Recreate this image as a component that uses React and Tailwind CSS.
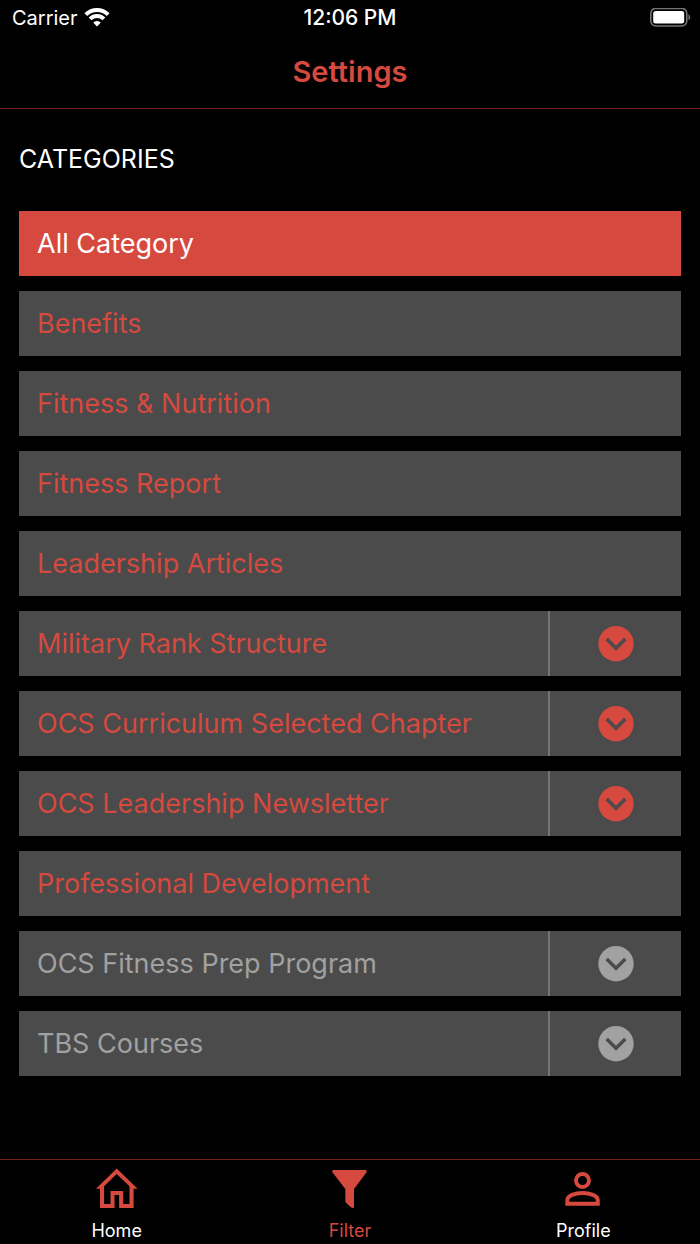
const categories = [
  { name: 'All Category', state: 'active' },
  { name: 'Benefits' },
  { name: 'Fitness & Nutrition' },
  { name: 'Fitness Report' },
  { name: 'Leadership Articles' },
  { name: 'Military Rank Structure', expandable: true },
  { name: 'OCS Curriculum Selected Chapter', expandable: true },
  { name: 'OCS Leadership Newsletter', expandable: true },
  { name: 'Professional Development' },
  { name: 'OCS Fitness Prep Program', expandable: true, state: 'muted' },
  { name: 'TBS Courses', expandable: true, state: 'muted' },
];

function WifiIcon() {
  return (
    <svg className="h-5 w-[26px]" viewBox="0 0 26 20" aria-hidden="true">
      <g fill="none" stroke="#fff" strokeWidth="4">
        <path d="M1.800 6.600A16 16 0 0 1 24.200 6.600" />
        <path d="M6.100 10.900A9.900 9.900 0 0 1 19.900 10.900" />
      </g>
      <path d="M13 18.500 9.200 14.600a5.500 5.500 0 0 1 7.600 0Z" fill="#fff" />
    </svg>
  );
}

function BatteryIcon() {
  return (
    <svg className="h-5 w-[42px]" viewBox="0 0 42 20" aria-hidden="true">
      <rect x="0.800" y="0.400" width="36" height="17.600" rx="5" fill="none" stroke="#747474" strokeWidth="1.600" />
      <rect x="3.200" y="3" width="31" height="12.500" rx="2.500" fill="#fff" />
      <path d="M38.500 6.200c2.300.8 2.300 5.200 0 6Z" fill="#747474" />
    </svg>
  );
}

function ChevronIcon() {
  return (
    <svg className="size-9" viewBox="0 0 36 36" aria-hidden="true">
      <circle cx="18" cy="17.700" r="17.700" fill="currentColor" />
      <path d="m8.700 13 9.300 9.300 9.300-9.300" fill="none" stroke="#4b4b4b" strokeWidth="3.600" />
    </svg>
  );
}

function HomeIcon() {
  return (
    <svg className="size-[42px]" viewBox="0 0 42 42" aria-hidden="true">
      <path
        fill="#d6493f"
        fillRule="evenodd"
        d="M20.700 1.500 0 21.800h4V41h14.500V28h4.600v13h14.500V21.800h4ZM20.700 7 33.500 19.300V37h-6.300V24H14.500v13H8.100V19.300Z"
      />
    </svg>
  );
}

function FilterIcon() {
  return (
    <svg className="size-[42px]" viewBox="0 0 42 42" aria-hidden="true">
      <path
        fill="#d6493f"
        d="M4.500 3h32c1.300 0 1.600 1.600.9 2.500L25 22v17.200c0 1.800-1.600 2.400-2.800 1.400l-5-4.600c-.6-.6-.9-1.100-.9-2V22L3.600 5.500C2.900 4.600 3.200 3 4.500 3Z"
      />
    </svg>
  );
}

function ProfileIcon() {
  return (
    <svg className="size-[42px]" viewBox="0 0 42 42" aria-hidden="true">
      <g fill="none" stroke="#d6493f" strokeWidth="3.900">
        <circle cx="20.500" cy="13.500" r="6.500" />
        <path d="M5.300 36.800V33.300C5.300 28.500 13.200 26 20.500 26S35.800 28.500 35.800 33.300V36.800Z" />
      </g>
    </svg>
  );
}

const tabs = [
  { name: 'Home', Icon: HomeIcon },
  { name: 'Filter', Icon: FilterIcon, current: true },
  { name: 'Profile', Icon: ProfileIcon },
];

function CategoryRow({ name, expandable, state }) {
  const tone =
    state === 'active'
      ? 'bg-[#d6493f] text-white'
      : state === 'muted'
        ? 'bg-[#4b4b4b] text-[#a1a1a1]'
        : 'bg-[#4b4b4b] text-[#d6493f]';
  return (
    <li className={`flex h-[65px] ${tone}`}>
      <button type="button" className="flex-1 px-[18px] text-left text-[27px] leading-8">
        {name}
      </button>
      {expandable && (
        <button
          type="button"
          aria-label={`Expand ${name}`}
          className="flex w-[133px] items-center justify-center border-l-2 border-[#747474]"
        >
          <ChevronIcon />
        </button>
      )}
    </li>
  );
}

export default function App() {
  return (
    <div className="flex min-h-screen flex-col bg-black font-['Inter','Liberation_Sans',sans-serif] text-white">
      <header className="border-b border-[#732520]">
        <div className="grid h-9 grid-cols-3 items-center px-2 text-xl leading-6">
          <div className="flex items-center gap-1.5 pl-1">
            <span>Carrier</span>
            <WifiIcon />
          </div>
          <span className="text-center text-[21px] font-medium">12:06 PM</span>
          <span className="justify-self-end">
            <BatteryIcon />
          </span>
        </div>
        <h1 className="flex h-[72px] items-center justify-center text-[29px] leading-8 font-semibold text-[#d6493f]">
          Settings
        </h1>
      </header>

      <main className="flex-1 px-[19px] pt-[34px]">
        <h2 className="text-[25px] leading-8">CATEGORIES</h2>
        <ul className="mt-9 flex flex-col gap-[15px]">
          {categories.map((category) => (
            <CategoryRow key={category.name} {...category} />
          ))}
        </ul>
      </main>

      <nav className="grid grid-cols-3 border-t border-[#732520] pt-[7px]">
        {tabs.map(({ name, Icon, current }) => (
          <a
            key={name}
            href={`#${name.toLowerCase()}`}
            aria-current={current ? 'page' : undefined}
            className={`flex flex-col items-center gap-2.5 pb-px text-lg leading-6 ${current ? 'text-[#d6493f]' : 'text-white'}`}
          >
            <Icon />
            {name}
          </a>
        ))}
      </nav>
    </div>
  );
}
